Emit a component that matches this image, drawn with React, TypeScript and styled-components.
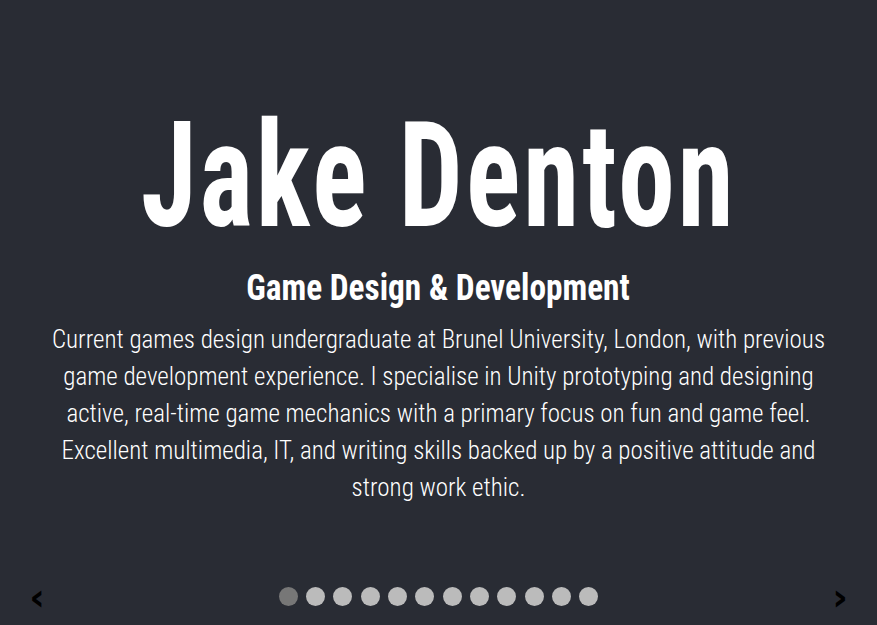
import React from "react";
import styled, { createGlobalStyle } from "styled-components";

const GlobalStyle = createGlobalStyle`
  html, body { margin: 0; padding: 0; }
  body {
    background: #292c34;
    color: #ffffff;
    font-family: Roboto, "Liberation Sans", sans-serif;
  }
`;

const Page = styled.main`
  min-height: 100vh;
  box-sizing: border-box;
  display: flex;
  flex-direction: column;
  align-items: center;
  padding-top: 104px;
`;

const Title = styled.h1`
  margin: 0;
  font-family: Roboto, "Liberation Sans", sans-serif;
  font-stretch: 75%;
  font-weight: 700;
  font-size: 146px;
  line-height: 1;
  letter-spacing: 4px;
  display: inline-block;
  transform: scaleX(0.776);
`;

const Subtitle = styled.h2`
  margin: 19px 0 0;
  font-family: Roboto, "Liberation Sans", sans-serif;
  font-stretch: 75%;
  font-weight: 700;
  font-size: 37px;
  line-height: 1;
  display: inline-block;
  transform: scaleX(0.9);
`;

const Bio = styled.p`
  margin: 15px 0 0;
  max-width: 790px;
  text-align: center;
  font-family: Roboto, "Liberation Sans", sans-serif;
  font-stretch: 75%;
  font-weight: 300;
  font-size: 25px;
  line-height: 37px;
`;

const Footer = styled.nav`
  margin-top: auto;
  align-self: stretch;
  height: 40px;
  margin-bottom: 9px;
  display: flex;
  align-items: center;
  justify-content: space-between;
  padding: 0 29px;
`;

const Arrow = styled.button`
  width: 16px;
  padding: 0;
  border: none;
  background: none;
  color: #000;
  font-family: "DejaVu Sans", sans-serif;
  font-size: 38px;
  font-weight: 700;
  line-height: 1;
  cursor: pointer;
  margin-top: 2px;
`;

const Dots = styled.div`
  display: flex;
  gap: 8.3px;
`;

const Dot = styled.span<{ $active?: boolean }>`
  width: 19px;
  height: 19px;
  border-radius: 50%;
  background: ${(p) => (p.$active ? "#777777" : "#bbbbbb")};
`;

export default function App() {
  return (
    <>
      <GlobalStyle />
      <Page>
        <Title>Jake Denton</Title>
        <Subtitle>Game Design &amp; Development</Subtitle>
        <Bio>
          Current games design undergraduate at Brunel University, London, with
          previous game development experience. I specialise in Unity
          prototyping and designing active, real-time game mechanics with a
          primary focus on fun and game feel. Excellent multimedia, IT, and
          writing skills backed up by a positive attitude and strong work ethic.
        </Bio>
        <Footer>
          <Arrow aria-label="Previous">‹</Arrow>
          <Dots>
            {Array.from({ length: 12 }).map((_, i) => (
              <Dot key={i} $active={i === 0} />
            ))}
          </Dots>
          <Arrow aria-label="Next">›</Arrow>
        </Footer>
      </Page>
    </>
  );
}
